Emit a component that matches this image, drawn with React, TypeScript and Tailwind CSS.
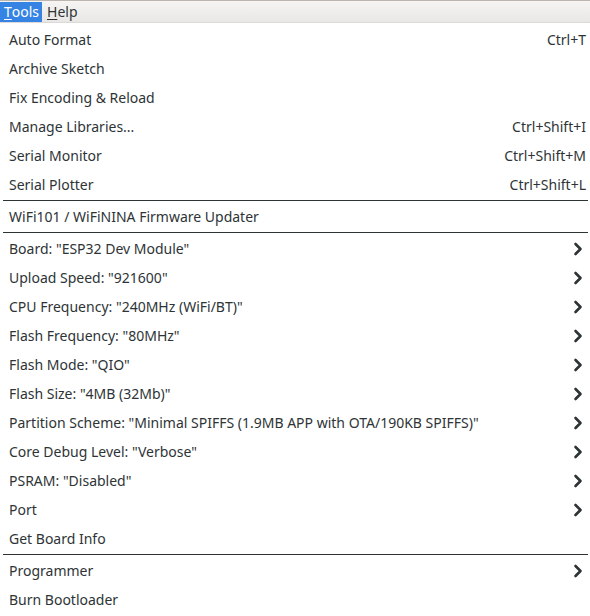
import React from "react";

type Item = { label: string; shortcut?: string; sub?: boolean } | "sep";

const items: Item[] = [
  { label: "Auto Format", shortcut: "Ctrl+T" },
  { label: "Archive Sketch" },
  { label: "Fix Encoding & Reload" },
  { label: "Manage Libraries...", shortcut: "Ctrl+Shift+I" },
  { label: "Serial Monitor", shortcut: "Ctrl+Shift+M" },
  { label: "Serial Plotter", shortcut: "Ctrl+Shift+L" },
  "sep",
  { label: "WiFi101 / WiFiNINA Firmware Updater" },
  "sep",
  { label: 'Board: "ESP32 Dev Module"', sub: true },
  { label: 'Upload Speed: "921600"', sub: true },
  { label: 'CPU Frequency: "240MHz (WiFi/BT)"', sub: true },
  { label: 'Flash Frequency: "80MHz"', sub: true },
  { label: 'Flash Mode: "QIO"', sub: true },
  { label: 'Flash Size: "4MB (32Mb)"', sub: true },
  { label: 'Partition Scheme: "Minimal SPIFFS (1.9MB APP with OTA/190KB SPIFFS)"', sub: true },
  { label: 'Core Debug Level: "Verbose"', sub: true },
  { label: 'PSRAM: "Disabled"', sub: true },
  { label: "Port", sub: true },
  { label: "Get Board Info" },
  "sep",
  { label: "Programmer", sub: true },
  { label: "Burn Bootloader" },
];

function Chevron() {
  return (
    <svg width="10" height="14" viewBox="0 0 10 14" className="block">
      <path d="M2.5 2 L7.5 7 L2.5 12" fill="none" stroke="#2e3436" strokeWidth="2.6" strokeLinecap="round" strokeLinejoin="round" />
    </svg>
  );
}

export default function App() {
  return (
    <div
      className="w-[590px] h-[616px] bg-white text-[#2e3436] overflow-hidden"
      style={{ fontFamily: '"Noto Sans", "Open Sans", sans-serif' }}
    >
      <div className="h-[23px] border-t border-[#bdb6ae] bg-gradient-to-b from-[#f6f5f4] to-[#e9e7e5] border-b border-b-[#dcd9d6] flex items-stretch text-[14px] leading-none">
        <div className="bg-[#3584e4] text-white px-[4px] flex items-center h-[20px] mt-[1px] w-[42px]">
          <span className="underline underline-offset-2 decoration-1">T</span>ools
        </div>
        <div className="px-[5px] flex items-center h-[20px] mt-[1px]">
          <span className="underline underline-offset-2 decoration-1">H</span>elp
        </div>
      </div>
      <div className="pt-[2px]">
        {items.map((it, i) =>
          it === "sep" ? (
            <div key={i} className="py-[1px] pl-[3px] pr-[2px]">
              <div className="h-[1px] bg-[#2e3436]" />
            </div>
          ) : (
            <div key={i} className="h-[29px] flex items-center pl-[9px] pr-[4px] text-[14px]">
              <span className="flex-1 whitespace-nowrap">{it.label}</span>
              {it.shortcut && <span className="whitespace-nowrap">{it.shortcut}</span>}
              {it.sub && (
                <span className="mr-[3px]">
                  <Chevron />
                </span>
              )}
            </div>
          )
        )}
      </div>
    </div>
  );
}
